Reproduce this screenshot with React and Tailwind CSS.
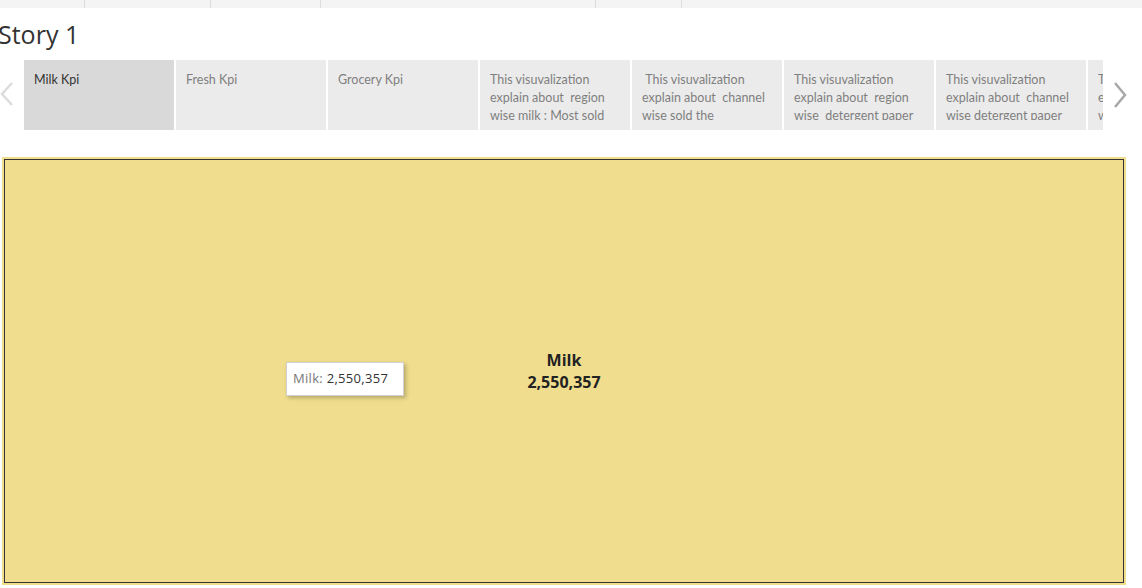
import React from "react";

const tabs = [
  { t: "Milk Kpi", sel: true },
  { t: "Fresh Kpi" },
  { t: "Grocery Kpi" },
  { t: "This visuvalization explain about  region wise milk : Most sold milk region is Other" },
  { t: " This visuvalization explain about  channel wise sold the  detergentpaper and milk" },
  { t: "This visuvalization explain about  region wise  detergent paper sold" },
  { t: "This visuvalization explain about  channel wise detergent paper sold" },
  { t: "This visuvalization explain about  region wise fresh" },
];

export default function App() {
  return (
    <div className="w-[1142px] h-[588px] bg-white overflow-hidden" style={{ fontFamily: "Lato, 'Open Sans', sans-serif" }}>
      <div className="h-[8px] bg-[#f4f4f4] flex">
        <div className="w-[85px] border-r border-[#dddddd]" />
        <div className="w-[126px] border-r border-[#dddddd]" />
        <div className="w-[110px] border-r border-[#dddddd]" />
        <div className="w-[275px] border-r border-[#dddddd]" />
        <div className="w-[86px] border-r border-[#dddddd]" />
      </div>
      <div className="h-[52px] pt-[10px]">
        <div className="text-[25px] leading-[32px] text-[#333333] ml-[-2px]" style={{ fontFamily: "'Open Sans', sans-serif" }}>Story 1</div>
      </div>
      <div className="h-[70px] flex">
        <div className="w-[24px] flex items-center justify-start">
          <svg width="14" height="26" viewBox="0 0 14 26" className="mt-[-2px]">
            <path d="M12 2 L2 13 L12 24" fill="none" stroke="#dcdcdc" strokeWidth="2.5" />
          </svg>
        </div>
        <div className="w-[1079px] overflow-hidden flex gap-[2px]">
          {tabs.map((tab, i) => (
            <div
              key={i}
              className={`w-[150px] shrink-0 h-[70px] px-[10px] pt-[11px] ${tab.sel ? "bg-[#d9d9d9]" : "bg-[#ebebeb]"}`}
            >
              <div
                className={`h-[49px] overflow-hidden text-[12.5px] leading-[18px] whitespace-pre-wrap ${tab.sel ? "text-[#333333]" : "text-[#7f7f7f]"}`}
              >
                {tab.t}
              </div>
            </div>
          ))}
        </div>
        <div className="flex-1 flex items-center pl-[9px]">
          <svg width="16" height="28" viewBox="0 0 16 28" className="mt-[-1px]">
            <path d="M3 2 L13 14 L3 26" fill="none" stroke="#a8a8a8" strokeWidth="2.5" />
          </svg>
        </div>
      </div>
      <div className="h-[27px]" />
      <div className="ml-[2px] w-[1124px] h-[428px] bg-[#f0de8e] p-[2px]">
        <div className="relative w-full h-full border border-[#333333] flex items-center justify-center">
          <div className="text-center text-[16px] leading-[22px] font-bold text-[#222222]" style={{ fontFamily: "'Open Sans', sans-serif" }}>
            <div>Milk</div>
            <div>2,550,357</div>
          </div>
          <div className="absolute left-[281px] top-[202px] w-[118px] h-[34px] bg-white border border-[#d0d0d0] shadow-[2px_2px_4px_rgba(0,0,0,0.25)] flex items-center pl-[6px] text-[13px] tracking-[0.3px]" style={{ fontFamily: "'Open Sans', sans-serif" }}>
            <span className="text-[#777777]">Milk:&nbsp;</span>
            <span className="text-[#333333]">2,550,357</span>
          </div>
        </div>
      </div>
    </div>
  );
}
